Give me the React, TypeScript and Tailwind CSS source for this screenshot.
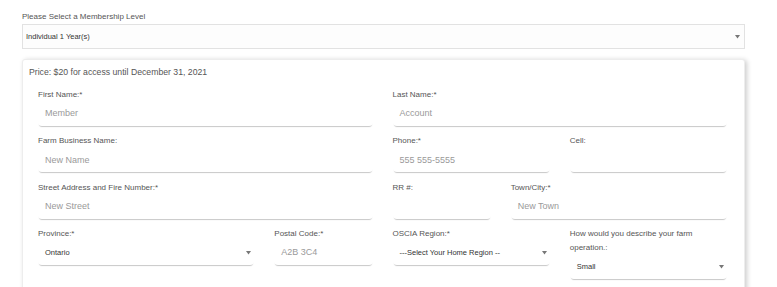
import React from "react";

const Arrow = ({ className = "" }: { className?: string }) => (
  <svg width="5" height="4" viewBox="0 0 5 4" className={className}>
    <polygon points="0,0 5,0 2.5,3.5" fill="#777" />
  </svg>
);

function Label({ children }: { children: React.ReactNode }) {
  return <div className="text-[8px] leading-[14px] text-[#555]">{children}</div>;
}

const boxCls =
  "h-[24px] rounded-[4px] bg-white shadow-[0_2px_1px_-1px_rgba(0,0,0,0.22)] flex items-center";

function InputField({ label, value }: { label: React.ReactNode; value?: string }) {
  return (
    <div className="min-w-0">
      <Label>{label}</Label>
      <div className={`${boxCls} px-[7px] text-[9px] text-[#9a9a9a]`}>{value}</div>
    </div>
  );
}

function SelectField({ label, value }: { label: React.ReactNode; value: string }) {
  return (
    <div className="min-w-0">
      <Label>{label}</Label>
      <div className={`${boxCls} pl-[7px] pr-[3px] justify-between text-[7.5px] text-[#333]`}>
        <span>{value}</span>
        <Arrow />
      </div>
    </div>
  );
}

export default function App() {
  return (
    <div className="min-h-[287px] bg-white pl-[22px] pt-[10px] font-['Liberation_Sans',Arial,sans-serif]">
      <div className="w-[723px]">
        <div className="text-[8px] leading-[14px] text-[#555]">Please Select a Membership Level</div>
        <div className="h-[25px] border border-[#e2e2e2] bg-[#fdfdfd] pl-[3px] pr-[4px] flex items-center justify-between text-[7.5px] text-[#333]">
          <span>Individual 1 Year(s)</span>
          <Arrow />
        </div>

        <div className="mt-[10px] rounded-[3px] border border-[#ededed] bg-white shadow-[2px_1px_5px_rgba(0,0,0,0.2)] px-[6px] pt-[5px] pb-[20px]">
          <div className="text-[8.7px] leading-[14px] text-[#555]">Price: $20 for access until December 31, 2021</div>
          <div className="mt-[9px] ml-[9px] mr-[11px] grid grid-cols-2 gap-x-5 gap-y-[8.33px] items-start">
            <InputField label="First Name:*" value="Member" />
            <InputField label="Last Name:*" value="Account" />

            <InputField label="Farm Business Name:" value="New Name" />
            <div className="grid grid-cols-2 gap-x-5 items-start">
              <InputField label="Phone:*" value="555 555-5555" />
              <InputField label="Cell:" />
            </div>

            <InputField label="Street Address and Fire Number:*" value="New Street" />
            <div className="grid grid-cols-12 gap-x-5 items-start">
              <div className="col-span-4">
                <InputField label="RR #:" />
              </div>
              <div className="col-span-8">
                <InputField label="Town/City:*" value="New Town" />
              </div>
            </div>

            <div className="grid grid-cols-12 gap-x-5 items-start">
              <div className="col-span-8">
                <SelectField label="Province:*" value="Ontario" />
              </div>
              <div className="col-span-4">
                <InputField label="Postal Code:*" value="A2B 3C4" />
              </div>
            </div>
            <div className="grid grid-cols-2 gap-x-5 items-start">
              <SelectField label="OSCIA Region:*" value="---Select Your Home Region --" />
              <SelectField label="How would you describe your farm operation.:" value="Small" />
            </div>
          </div>
        </div>
      </div>
    </div>
  );
}
